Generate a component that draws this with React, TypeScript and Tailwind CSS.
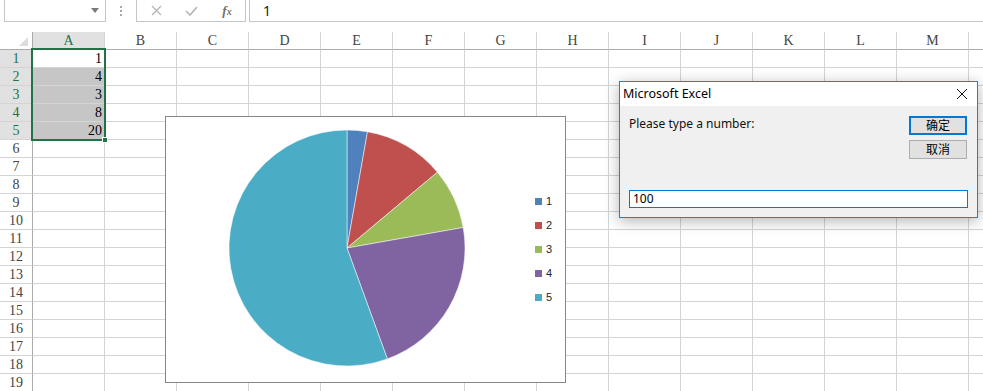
import React from "react";

const cols = ["A", "B", "C", "D", "E", "F", "G", "H", "I", "J", "K", "L", "M", "N"];
const rows = Array.from({ length: 19 }, (_, i) => i + 1);
const values: Record<number, number> = { 1: 1, 2: 4, 3: 3, 4: 8, 5: 20 };

const series = [
  { label: "1", value: 1, color: "#4f81bd" },
  { label: "2", value: 4, color: "#c0504d" },
  { label: "3", value: 3, color: "#9bbb59" },
  { label: "4", value: 8, color: "#8064a2" },
  { label: "5", value: 20, color: "#4bacc6" },
];

const cellFont = "font-['Liberation_Serif','DejaVu_Serif',serif]";
const uiFont = "font-['Noto_Sans','Noto_Sans_CJK_SC',sans-serif]";

function slicePath(cx: number, cy: number, r: number, a0: number, a1: number) {
  const rad = (a: number) => (a * Math.PI) / 180;
  const x0 = cx + r * Math.sin(rad(a0));
  const y0 = cy - r * Math.cos(rad(a0));
  const x1 = cx + r * Math.sin(rad(a1));
  const y1 = cy - r * Math.cos(rad(a1));
  const large = a1 - a0 > 180 ? 1 : 0;
  return `M${cx} ${cy} L${x0} ${y0} A${r} ${r} 0 ${large} 1 ${x1} ${y1} Z`;
}

const PieChart: React.FC = () => {
  const total = series.reduce((s, d) => s + d.value, 0);
  let acc = 0;
  return (
    <svg width="240" height="240" viewBox="0 0 240 240" className="shrink-0">
      {series.map((d) => {
        const a0 = (acc / total) * 360;
        acc += d.value;
        const a1 = (acc / total) * 360;
        return (
          <path
            key={d.label}
            d={slicePath(120, 120, 118, a0, a1)}
            fill={d.color}
            stroke="#ffffff"
            strokeWidth="0.5"
          />
        );
      })}
    </svg>
  );
};

const Toolbar: React.FC = () => (
  <div className="flex h-[32px] items-start pl-[4px]">
    <div className="relative -mt-px flex h-[23px] w-[102px] items-center justify-end border border-[#c6c6c6] pr-[6px]">
      <svg width="8" height="5" viewBox="0 0 8 5">
        <path d="M0 0 L8 0 L4 5 Z" fill="#7a7a7a" />
      </svg>
    </div>
    <div className="flex h-[22px] w-[30px] flex-col items-center justify-center gap-[2px]">
      <span className="h-[2px] w-[2px] bg-[#a8a8a8]" />
      <span className="h-[2px] w-[2px] bg-[#a8a8a8]" />
      <span className="h-[2px] w-[2px] bg-[#a8a8a8]" />
    </div>
    <div className="-mt-px flex h-[23px] w-[110px] items-center border border-[#c6c6c6]">
      <div className="flex w-[36px] justify-center pl-[2px]">
        <svg width="11" height="11" viewBox="0 0 11 11">
          <path d="M1 1 L10 10 M10 1 L1 10" stroke="#b4b4b4" strokeWidth="1.3" />
        </svg>
      </div>
      <div className="flex w-[36px] justify-center">
        <svg width="13" height="10" viewBox="0 0 13 10">
          <path d="M1 5 L5 9 L12 1" stroke="#b4b4b4" strokeWidth="1.6" fill="none" />
        </svg>
      </div>
      <div className="flex w-[36px] justify-center">
        <span className="font-['Liberation_Serif',serif] text-[13px] font-bold italic leading-none text-[#6f6f6f]">
          f<span className="text-[10px]">x</span>
        </span>
      </div>
    </div>
    <div className="-mt-px ml-[3px] flex h-[23px] flex-1 items-center border border-r-0 border-[#c6c6c6] pl-[13px]">
      <span className={`${uiFont} text-[14px] leading-none text-[#222]`}>1</span>
    </div>
  </div>
);

const Sheet: React.FC = () => (
  <div className={`relative ${cellFont} text-[14px]`}>
    <div className="flex h-[18px]">
      <div className="relative flex w-[33px] shrink-0 items-end justify-end border-b border-r border-[#ababab] bg-white pb-[3px] pr-[4px]">
        <svg width="9" height="9" viewBox="0 0 9 9">
          <path d="M9 0 L9 9 L0 9 Z" fill="#dcdcdc" />
        </svg>
      </div>
      {cols.map((c) => (
        <div
          key={c}
          className={`flex w-[72px] shrink-0 items-center justify-center border-b border-r border-[#d4d4d4] border-b-[#ababab] leading-none ${
            c === "A" ? "bg-[#e1e1e1] text-[#217346]" : "bg-white text-[#444]"
          }`}
        >
          {c === "N" ? "" : c}
        </div>
      ))}
    </div>
    {rows.map((r) => (
      <div key={r} className="flex h-[18px]">
        <div
          className={`flex w-[33px] shrink-0 items-center justify-center border-b border-r border-[#d4d4d4] border-r-[#ababab] leading-none ${
            r <= 5 ? "bg-[#e1e1e1] text-[#217346]" : "bg-white text-[#444]"
          }`}
        >
          {r}
        </div>
        {cols.map((c) => {
          const sel = c === "A" && r >= 2 && r <= 5;
          return (
            <div
              key={c}
              className={`flex w-[72px] shrink-0 items-center justify-end border-b border-r border-[#d4d4d4] pr-[2px] leading-none text-black ${
                sel ? "bg-[#c6c6c6]" : "bg-white"
              }`}
            >
              {c === "A" && values[r] !== undefined ? values[r] : ""}
            </div>
          );
        })}
      </div>
    ))}
    <div className="absolute left-[31px] top-[16px] h-[93px] w-[75px] border-2 border-[#217346]" />
    <div className="absolute left-[102px] top-[105px] h-[6px] w-[6px] border border-white bg-[#217346]" />
  </div>
);

const Chart: React.FC = () => (
  <div className="absolute left-[165px] top-[116px] flex h-[267px] w-[401px] items-start border border-[#868686] bg-white pl-[61px] pt-[11px]">
    <PieChart />
    <div className="ml-[68px] mt-[61px] flex flex-col">
      {series.map((d) => (
        <div key={d.label} className="flex h-[24px] items-center gap-[4px]">
          <span className="h-[7px] w-[7px]" style={{ backgroundColor: d.color }} />
          <span className="font-['Liberation_Sans',sans-serif] text-[11px] leading-none text-[#262626]">
            {d.label}
          </span>
        </div>
      ))}
    </div>
  </div>
);

const InputDialog: React.FC = () => (
  <div
    className={`absolute left-[619px] top-[81px] flex h-[137px] w-[359px] flex-col border border-[#1883d7] bg-[#f0f0f0] shadow-[0_3px_14px_rgba(0,0,0,0.3)] ${uiFont}`}
  >
    <div className="flex h-[24px] items-center justify-between bg-white pl-[3px] pr-[10px]">
      <span className="text-[12.5px] leading-none text-black">Microsoft Excel</span>
      <svg width="10" height="10" viewBox="0 0 10 10">
        <path d="M0 0 L10 10 M10 0 L0 10" stroke="#111" strokeWidth="1" />
      </svg>
    </div>
    <div className="flex flex-1 flex-col px-[9px] pb-[9px] pt-[10px]">
      <div className="flex items-start justify-between">
        <span className="text-[12px] leading-[16px] text-[#111]">Please type a number:</span>
        <div className="mr-px flex flex-col gap-[5px]">
          <button className="flex h-[19px] w-[58px] items-center justify-center border-2 border-[#0078d7] bg-[#e1e1e1] text-[12px] leading-none text-black">
            确定
          </button>
          <button className="flex h-[19px] w-[58px] items-center justify-center border border-[#adadad] bg-[#e1e1e1] text-[12px] leading-none text-black">
            取消
          </button>
        </div>
      </div>
      <div className="mt-auto flex h-[18px] items-center border border-[#0078d7] bg-white pl-[3px] text-[12px] leading-none text-black">
        100
      </div>
    </div>
  </div>
);

const App: React.FC = () => {
  return (
    <div className="relative h-[391px] w-[983px] overflow-hidden bg-white">
      <Toolbar />
      <Sheet />
      <Chart />
      <InputDialog />
    </div>
  );
};

export default App;
